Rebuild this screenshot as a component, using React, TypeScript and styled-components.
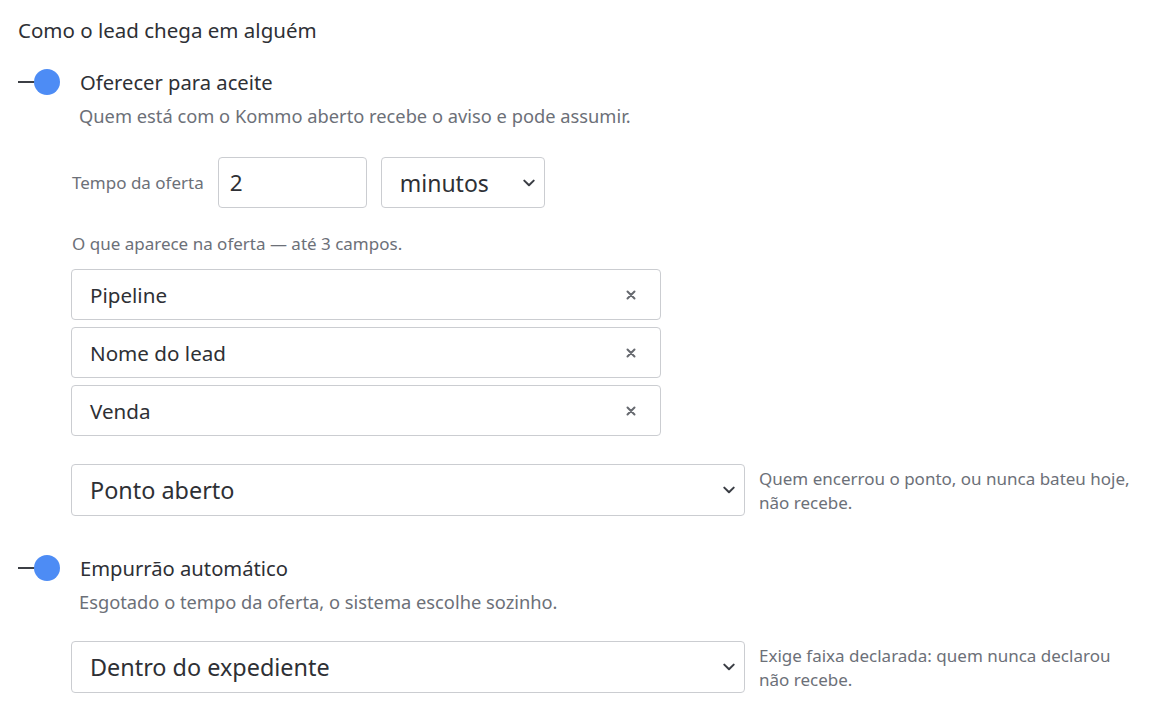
import React from "react";
import styled, { createGlobalStyle } from "styled-components";

const Global = createGlobalStyle`
  html, body { margin: 0; padding: 0; background: #ffffff; }
  body { font-family: "Noto Sans", "Open Sans", sans-serif; color: #2e3035; }
  * { box-sizing: border-box; }
`;

const Page = styled.div`
  padding: 16px 0 24px 18px;
  display: flex;
  flex-direction: column;
`;

const Title = styled.h2`
  margin: 0;
  font-size: 20.5px;
  font-weight: 400;
  line-height: 28px;
  color: #2e3035;
`;

const Section = styled.section<{ $top: number }>`
  margin-top: ${(p) => p.$top}px;
  display: flex;
  flex-direction: column;
`;

const ToggleRow = styled.div`
  display: flex;
  align-items: center;
  gap: 20px;
  height: 28px;
`;

const Switch = styled.div`
  display: flex;
  align-items: center;
  width: 42px;
  height: 26px;
`;

const Track = styled.span`
  width: 17px;
  height: 2px;
  background: #3c3f45;
`;

const Knob = styled.span`
  width: 26px;
  height: 26px;
  border-radius: 50%;
  background: #4d8cf5;
  margin-left: -1px;
`;

const ToggleLabel = styled.span`
  font-size: 20.2px;
  line-height: 28px;
  color: #2e3035;
`;

const Description = styled.p`
  margin: 8px 0 0 61px;
  font-size: 18.3px;
  line-height: 24px;
  color: #6c7078;
`;

const Body = styled.div<{ $top: number }>`
  margin: ${(p) => p.$top}px 0 0 53px;
  display: flex;
  flex-direction: column;
`;

const InlineRow = styled.div`
  display: flex;
  align-items: center;
  gap: 14px;
`;

const FieldLabel = styled.span`
  font-size: 17px;
  color: #6c7078;
  padding-left: 1px;
`;

const Box = styled.div<{ $w: number; $h?: number; $pad?: number; $padR?: number }>`
  flex: none;
  width: ${(p) => p.$w}px;
  height: ${(p) => p.$h ?? 51}px;
  border: 1px solid #cbcdd1;
  border-radius: 4px;
  background: #fff;
  display: flex;
  align-items: center;
  padding: 0 ${(p) => p.$padR ?? 9}px 0 ${(p) => p.$pad ?? 18}px;
`;

const ValueText = styled.span<{ $size: number }>`
  flex: 1;
  font-size: ${(p) => p.$size}px;
  color: #2e3035;
  white-space: nowrap;
`;

const Chevron = styled.svg`
  width: 12px;
  height: 8px;
  flex: none;
`;

const Cross = styled.svg`
  width: 10px;
  height: 10px;
  flex: none;
`;

const Hint = styled.p<{ $top: number }>`
  margin: ${(p) => p.$top}px 0 0 1px;
  font-size: 17px;
  line-height: 24px;
  color: #6c7078;
`;

const ChipList = styled.div`
  margin-top: 13px;
  display: flex;
  flex-direction: column;
  gap: 7px;
`;

const SelectRow = styled.div<{ $top: number }>`
  margin-top: ${(p) => p.$top}px;
  display: flex;
  align-items: flex-start;
  gap: 14px;
`;

const SideNote = styled.p`
  flex: none;
  margin: 3px 0 0 0;
  width: 384px;
  font-size: 17px;
  line-height: 24px;
  color: #6c7078;
`;

const ChevronIcon = () => (
  <Chevron viewBox="0 0 12 8">
    <path d="M1.3 1.6 L6 6.3 L10.7 1.6" fill="none" stroke="#3a3d44" strokeWidth="2" strokeLinecap="round" strokeLinejoin="round" />
  </Chevron>
);

const CrossIcon = () => (
  <Cross viewBox="0 0 10 10">
    <path d="M1.5 1.5 L8.5 8.5 M8.5 1.5 L1.5 8.5" fill="none" stroke="#66696f" strokeWidth="2" strokeLinecap="round" />
  </Cross>
);

const Toggle = ({ label }: { label: string }) => (
  <ToggleRow>
    <Switch>
      <Track />
      <Knob />
    </Switch>
    <ToggleLabel>{label}</ToggleLabel>
  </ToggleRow>
);

const chips = ["Pipeline", "Nome do lead", "Venda"];

export default function App() {
  return (
    <>
      <Global />
      <Page>
        <Title>Como o lead chega em alguém</Title>

        <Section $top={24}>
          <Toggle label="Oferecer para aceite" />
          <Description>Quem está com o Kommo aberto recebe o aviso e pode assumir.</Description>
          <Body $top={29}>
            <InlineRow>
              <FieldLabel>Tempo da oferta</FieldLabel>
              <Box $w={149} $h={51} $pad={11}>
                <ValueText $size={22.5}>2</ValueText>
              </Box>
              <Box $w={164} $h={51} $pad={18}>
                <ValueText $size={23}>minutos</ValueText>
                <ChevronIcon />
              </Box>
            </InlineRow>
            <Hint $top={24}>O que aparece na oferta — até 3 campos.</Hint>
            <ChipList>
              {chips.map((c) => (
                <Box key={c} $w={590} $h={51} $pad={18} $padR={24}>
                  <ValueText $size={20.6}>{c}</ValueText>
                  <CrossIcon />
                </Box>
              ))}
            </ChipList>
            <SelectRow $top={28}>
              <Box $w={674} $h={52} $pad={18}>
                <ValueText $size={23.4}>Ponto aberto</ValueText>
                <ChevronIcon />
              </Box>
              <SideNote>Quem encerrou o ponto, ou nunca bateu hoje, não recebe.</SideNote>
            </SelectRow>
          </Body>
        </Section>

        <Section $top={38}>
          <Toggle label="Empurrão automático" />
          <Description>Esgotado o tempo da oferta, o sistema escolhe sozinho.</Description>
          <Body $top={27}>
            <SelectRow $top={0}>
              <Box $w={674} $h={52} $pad={18}>
                <ValueText $size={23.4}>Dentro do expediente</ValueText>
                <ChevronIcon />
              </Box>
              <SideNote>Exige faixa declarada: quem nunca declarou não recebe.</SideNote>
            </SelectRow>
          </Body>
        </Section>
      </Page>
    </>
  );
}
